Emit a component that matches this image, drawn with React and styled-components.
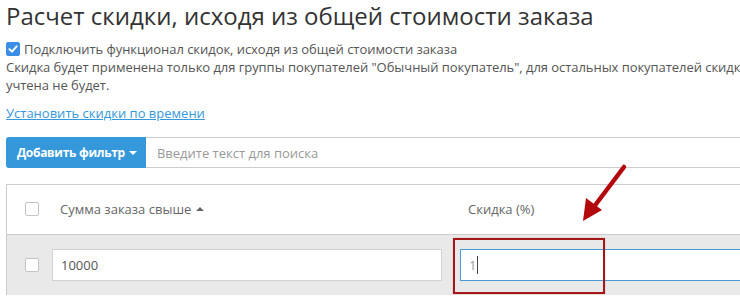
import React from 'react';
import styled, { createGlobalStyle } from 'styled-components';

const GlobalStyle = createGlobalStyle`
    html, body {
        margin: 0;
        padding: 0;
        background: #ffffff;
        overflow: hidden;
    }
    body {
        font-family: "Open Sans", "Liberation Sans", sans-serif;
        font-size: 13px;
        color: #555;
    }
`;

const Page = styled.div`
    position: relative;
    width: 900px;
    padding: 1px 0 0 6px;
`;

const Title = styled.h1`
    margin: 0;
    font-size: 24px;
    line-height: 30px;
    font-weight: 400;
    color: #333;
`;

const Info = styled.div`
    margin-top: 9px;
    width: 752px;
    line-height: 18px;
    color: #555;
    letter-spacing: -0.05px;
`;

const CheckLabel = styled.label`
    display: flex;
    align-items: center;
    gap: 4px;
`;

const Box = styled.span`
    display: inline-flex;
    align-items: center;
    justify-content: center;
    box-sizing: border-box;
    width: 14px;
    height: 14px;
    border-radius: 2px;
    background: ${({ checked }) => (checked ? '#3a8ee6' : '#fff')};
    border: 1px solid ${({ checked }) => (checked ? '#3a8ee6' : '#c4c4c4')};
    flex-shrink: 0;
`;

const TimeLink = styled.a`
    display: inline-block;
    margin-top: 10px;
    line-height: 18px;
    color: #3498db;
    text-decoration: underline;
`;

const Toolbar = styled.div`
    display: flex;
    margin-top: 15px;
    height: 31px;
`;

const FilterButton = styled.button`
    display: flex;
    align-items: center;
    gap: 4px;
    height: 31px;
    padding: 0 9px 0 11px;
    border: none;
    border-radius: 3px 0 0 3px;
    background: #3498db;
    color: #fff;
    font-family: inherit;
    font-size: 12px;
    font-weight: 700;
    letter-spacing: -0.3px;
`;

const Caret = styled.span`
    width: 0;
    height: 0;
    border-left: ${({ up }) => (up ? 4 : 4.5)}px solid transparent;
    border-right: ${({ up }) => (up ? 4 : 4.5)}px solid transparent;
    ${({ up, color }) =>
        up
            ? `border-bottom: 4px solid ${color};`
            : `border-top: 4px solid ${color};`}
`;

const Search = styled.div`
    flex: 1;
    display: flex;
    align-items: center;
    box-sizing: border-box;
    padding-left: 11px;
    border-top: 1px solid #ccc;
    border-bottom: 1px solid #ccc;
    color: #999;
`;

const Table = styled.div`
    margin-top: 16px;
    border-left: 1px solid #ccc;
    border-top: 1px solid #ccc;
    display: grid;
    grid-template-columns: 36px 408px 408px;
`;

const Row = styled.div`
    display: contents;
`;

const Cell = styled.div`
    display: flex;
    align-items: center;
    box-sizing: border-box;
    height: ${({ head }) => (head ? '50px' : '60px')};
    padding: ${({ check }) => (check ? '0 0 0 18px' : '0 9px')};
    background: ${({ head }) => (head ? '#fff' : '#e9e9e9')};
    border-bottom: ${({ head }) => (head ? '1px solid #ccc' : 'none')};
    padding-bottom: ${({ head }) => (head ? '2px' : '0')};
`;

const HeadText = styled.span`
    display: flex;
    align-items: center;
    gap: 5px;
    padding-left: 8px;
    color: #666;
`;

const Field = styled.div`
    display: flex;
    align-items: center;
    width: 100%;
    height: 32px;
    box-sizing: border-box;
    padding-left: 8px;
    background: #fff;
    border: 1px solid ${({ focused }) => (focused ? '#4b9ad6' : '#d2d2d2')};
    color: ${({ focused }) => (focused ? '#999' : '#555')};
`;

const Cursor = styled.span`
    display: inline-block;
    width: 1px;
    height: 18px;
    margin-left: 1px;
    background: #444;
`;

const Highlight = styled.div`
    position: absolute;
    left: 453px;
    top: 238px;
    width: 152px;
    height: 56px;
    box-sizing: border-box;
    border: 2px solid #a3161a;
    box-shadow: 0 0 1px rgba(163, 22, 26, 0.4);
`;

const Arrow = styled.svg`
    position: absolute;
    left: 575px;
    top: 160px;
`;

const CheckMark = () => (
    <svg width="10" height="10" viewBox="0 0 10 10">
        <path d="M1.5 5.2 L4 7.6 L8.6 2.4" fill="none" stroke="#fff" strokeWidth="2" strokeLinecap="round" strokeLinejoin="round" />
    </svg>
);

export default function App() {
    return (
        <Page>
            <GlobalStyle />
            <Title>Расчет скидки, исходя из общей стоимости заказа</Title>
            <Info>
                <CheckLabel>
                    <Box checked><CheckMark /></Box>
                    Подключить функционал скидок, исходя из общей стоимости заказа
                </CheckLabel>
                Скидка будет применена только для группы покупателей "Обычный покупатель", для остальных покупателей скидка учтена не будет.
            </Info>
            <TimeLink>Установить скидки по времени</TimeLink>
            <Toolbar>
                <FilterButton>
                    Добавить фильтр
                    <Caret color="#fff" />
                </FilterButton>
                <Search>Введите текст для поиска</Search>
            </Toolbar>
            <Table>
                <Row>
                    <Cell head check><Box /></Cell>
                    <Cell head>
                        <HeadText>
                            Сумма заказа свыше
                            <Caret up color="#666" />
                        </HeadText>
                    </Cell>
                    <Cell head><HeadText>Скидка (%)</HeadText></Cell>
                </Row>
                <Row>
                    <Cell check><Box /></Cell>
                    <Cell><Field>10000</Field></Cell>
                    <Cell><Field focused>1<Cursor /></Field></Cell>
                </Row>
            </Table>
            <Highlight />
            <Arrow width="60" height="66" viewBox="0 0 60 66">
                <path d="M49 7 L18 48" stroke="#b3080c" strokeWidth="4.5" strokeLinecap="round" />
                <path d="M8 61 L11 38 L27 50 Z" fill="#b3080c" />
            </Arrow>
        </Page>
    );
}
